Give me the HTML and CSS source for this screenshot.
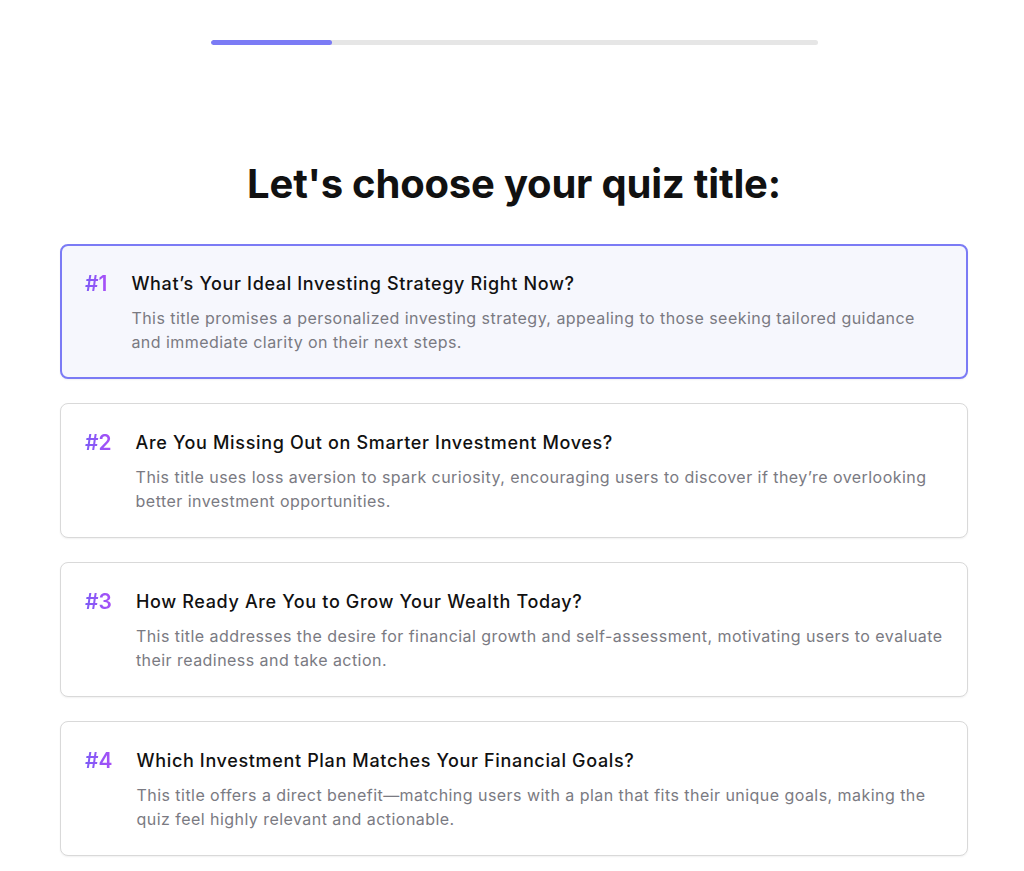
FILE: index.html
```html
<!DOCTYPE html>
<html lang="en">
<head>
    <meta charset="UTF-8">
    <meta name="viewport" content="width=device-width, initial-scale=1.0">
    <title>Quiz Title</title>
    <link rel="stylesheet" href="styles.css">
</head>
<body>
    <div class="progress">
        <div class="progress-fill"></div>
    </div>

    <div class="container">
        <h1>Let's choose your quiz title:</h1>

        <div class="option selected">
            <span class="num">#1</span>
            <div class="option-text">
                <h3>What’s Your Ideal Investing Strategy Right Now?</h3>
                <p>This title promises a personalized investing strategy, appealing to those seeking tailored guidance and immediate clarity on their next steps.</p>
            </div>
        </div>

        <div class="option">
            <span class="num">#2</span>
            <div class="option-text">
                <h3>Are You Missing Out on Smarter Investment Moves?</h3>
                <p>This title uses loss aversion to spark curiosity, encouraging users to discover if they’re overlooking better investment opportunities.</p>
            </div>
        </div>

        <div class="option">
            <span class="num">#3</span>
            <div class="option-text">
                <h3>How Ready Are You to Grow Your Wealth Today?</h3>
                <p>This title addresses the desire for financial growth and self-assessment, motivating users to evaluate their readiness and take action.</p>
            </div>
        </div>

        <div class="option">
            <span class="num">#4</span>
            <div class="option-text">
                <h3>Which Investment Plan Matches Your Financial Goals?</h3>
                <p>This title offers a direct benefit—matching users with a plan that fits their unique goals, making the quiz feel highly relevant and actionable.</p>
            </div>
        </div>
    </div>
</body>
</html>
```

FILE: styles.css
```css
* {
    margin: 0;
    padding: 0;
    box-sizing: border-box;
    font-family: 'Inter', 'Noto Sans', sans-serif;
}

body {
    background: #fff;
    padding: 40px 0 0 4px;
}

.progress {
    width: 607px;
    height: 5px;
    margin: 0 auto;
    background: #e6e6e6;
    border-radius: 3px;
    overflow: hidden;
}

.progress-fill {
    width: 20%;
    height: 100%;
    background: #7b7bf5;
    border-radius: 3px;
}

.container {
    width: 908px;
    margin: 0 auto;
    padding-top: 109px;
}

h1 {
    text-align: center;
    font-size: 40px;
    font-weight: 700;
    color: #111;
    letter-spacing: -0.2px;
    line-height: 60px;
    margin-bottom: 30px;
}

.option {
    display: flex;
    align-items: flex-start;
    gap: 24px;
    background: #fff;
    border: 1px solid #d9d9d9;
    border-radius: 8px;
    box-shadow: 0 1px 2px rgba(0, 0, 0, 0.06);
    padding: 27px 24px 24px 24px;
    margin-bottom: 24px;
}

.option.selected {
    background: #f6f7fd;
    border: 2px solid #7b7bf5;
    padding: 26px 23px 23px 23px;
}

.num {
    font-size: 21px;
    font-weight: 600;
    line-height: 24px;
    color: #9b4dff;
    background: linear-gradient(90deg, #7d5cf6, #a94ff7);
    -webkit-background-clip: text;
    background-clip: text;
    -webkit-text-fill-color: transparent;
}

.option-text h3 {
    font-size: 18px;
    font-weight: 500;
    color: #111;
    letter-spacing: 0.65px;
    line-height: 24px;
    margin-bottom: 10px;
}

.option-text p {
    font-size: 16px;
    color: #7a7a82;
    letter-spacing: 0.45px;
    line-height: 24px;
}
```
